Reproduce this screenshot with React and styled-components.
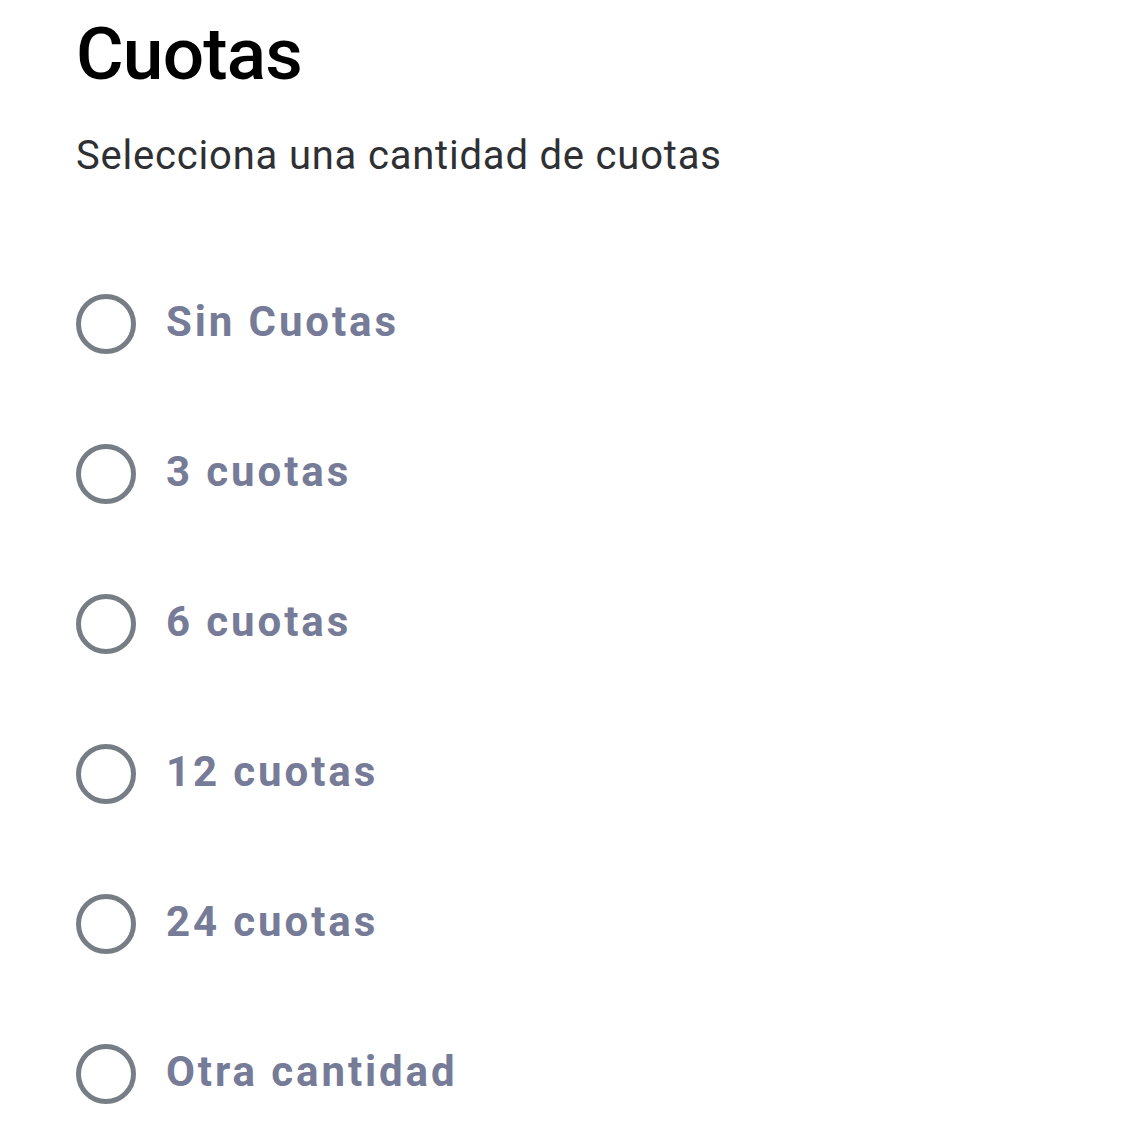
import React, { useState } from "react";
import styled, { createGlobalStyle } from "styled-components";

const GlobalStyle = createGlobalStyle`
  body {
    margin: 0;
    background: #ffffff;
    font-family: Roboto, "Noto Sans", sans-serif;
  }
`;

const options = ["Sin Cuotas", "3 cuotas", "6 cuotas", "12 cuotas", "24 cuotas", "Otra cantidad"];

const App = () => {
  const [selected, setSelected] = useState(null);

  return (
    <Page>
      <GlobalStyle />
      <Title>Cuotas</Title>
      <Subtitle>Selecciona una cantidad de cuotas</Subtitle>
      <OptionList>
        {options.map((label, index) => (
          <OptionRow key={label} onClick={() => setSelected(index)}>
            <Radio checked={selected === index} />
            <OptionLabel>{label}</OptionLabel>
          </OptionRow>
        ))}
      </OptionList>
    </Page>
  );
};

export default App;

const Page = styled.div`
  padding: 18px 76px 0;
`;

const Title = styled.h1`
  margin: 0;
  font-size: 73px;
  line-height: 73px;
  font-weight: 500;
  letter-spacing: -0.8px;
  color: #000000;
`;

const Subtitle = styled.p`
  margin: 45px 0 0;
  font-size: 40px;
  line-height: 40px;
  font-weight: 400;
  letter-spacing: 0.8px;
  color: #2f3033;
`;

const OptionList = styled.div`
  display: flex;
  flex-direction: column;
  gap: 90px;
  margin-top: 118px;
`;

const OptionRow = styled.div`
  display: flex;
  align-items: center;
  gap: 30px;
  height: 60px;
  cursor: pointer;
`;

const Radio = styled.span`
  box-sizing: border-box;
  width: 60px;
  height: 60px;
  border-radius: 50%;
  border: 5px solid #767d84;
  flex-shrink: 0;
  position: relative;

  &::after {
    content: "";
    display: ${(props) => (props.checked ? "block" : "none")};
    position: absolute;
    inset: 9px;
    border-radius: 50%;
    background: #767d84;
  }
`;

const OptionLabel = styled.span`
  font-size: 42px;
  line-height: 42px;
  font-weight: 700;
  letter-spacing: 2.9px;
  color: #767b98;
  margin-top: -4px;
`;
